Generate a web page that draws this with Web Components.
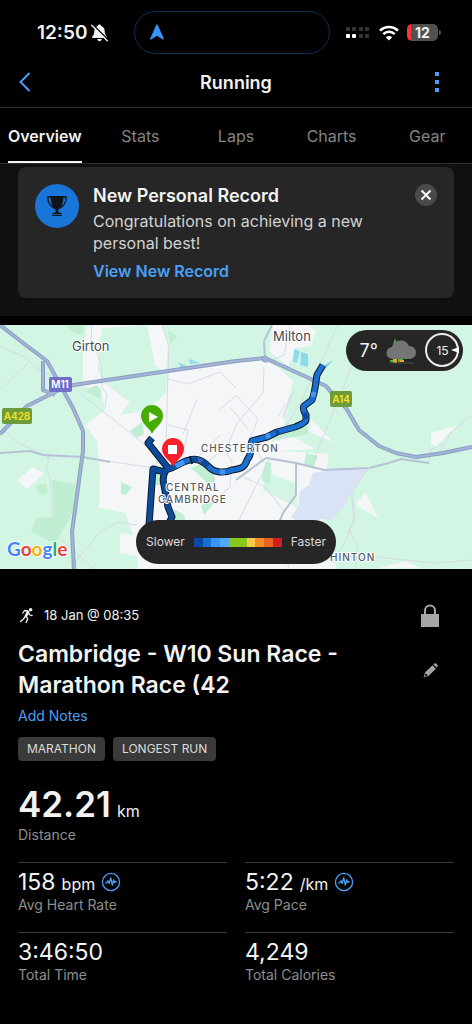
<!DOCTYPE html>
<html lang="en">
<head>
<meta charset="utf-8">
<meta name="viewport" content="width=device-width, initial-scale=1">
<title>Running</title>
<style>
  body {
    margin: 0;
    background: #000;
    color: #f2f2f2;
    font-family: Inter, "Liberation Sans", sans-serif;
    --accent: #4aa0f6;
    --muted: #8e8e8e;
    --line: #303030;
  }
  .stats {
    display: grid;
    grid-template-columns: 1fr 1fr;
    column-gap: 18px;
    padding: 0 18px 40px;
  }
  .wide {
    grid-column: 1 / -1;
  }
</style>
</head>
<body>
  <status-bar>12:50</status-bar>
  <nav-header>Running</nav-header>
  <tab-bar>
    <tab-item active>Overview</tab-item>
    <tab-item>Stats</tab-item>
    <tab-item>Laps</tab-item>
    <tab-item>Charts</tab-item>
    <tab-item>Gear</tab-item>
  </tab-bar>

  <record-banner>
    <span slot="title">New Personal Record</span>
    Congratulations on achieving a new personal best!
    <span slot="action">View New Record</span>
  </record-banner>

  <route-map>
    <weather-pill slot="weather" wind="15">7°</weather-pill>
    <pace-legend slot="legend"></pace-legend>
  </route-map>

  <activity-header>
    <span slot="date">18 Jan @ 08:35</span>
    Cambridge - W10 Sun Race - Marathon Race (42
    <tag-chip slot="tags">MARATHON</tag-chip>
    <tag-chip slot="tags">LONGEST RUN</tag-chip>
  </activity-header>

  <main class="stats">
    <stat-item class="wide" large unit="km" label="Distance">42.21</stat-item>
    <stat-item pulse unit="bpm" label="Avg Heart Rate">158</stat-item>
    <stat-item pulse unit="/km" label="Avg Pace">5:22</stat-item>
    <stat-item label="Total Time">3:46:50</stat-item>
    <stat-item label="Total Calories">4,249</stat-item>
  </main>

<script>
class StatusBar extends HTMLElement {
  constructor() {
    super();
    this.attachShadow({ mode: 'open' });
    this.shadowRoot.innerHTML = `
      <style>
        :host {
          display: grid;
          grid-template-columns: 1fr 196px 1fr;
          align-items: center;
          padding: 11px 8px 4px 0;
        }
        .left, .right {
          display: flex;
          align-items: center;
        }
        .left {
          padding-left: 37px;
          gap: 4px;
          font-size: 19px;
          line-height: 24px;
          font-weight: 600;
        }
        .right {
          gap: 8px;
          padding-left: 15px;
        }
        .island {
          box-sizing: border-box;
          height: 43px;
          border: 1px solid #0b315a;
          border-radius: 22px;
          padding: 12px 14px;
        }
        .battery {
          display: flex;
          align-items: center;
        }
        .level {
          width: 31px;
          border-radius: 5px;
          background: linear-gradient(to right, #ff3238 4px, #505050 4px);
          font-size: 14px;
          line-height: 17px;
          font-weight: 700;
          text-align: center;
        }
        .tip {
          width: 2px;
          height: 5px;
          margin-left: 1px;
          border-radius: 0 2px 2px 0;
          background: #505050;
        }
        svg { display: block; }
      </style>
      <div class="left">
        <slot></slot>
        <svg width="17" height="18" viewBox="0 0 17 18">
          <path d="M8.500 .5c-.9 0-1.500.6-1.600 1.400C4.500 2.500 3.300 4.600 3.300 7c0 3-.8 4.200-2 5.600-.5.600-.2 1.400.6 1.400h13.200c.8 0 1.100-.8.600-1.400-1.200-1.400-2-2.600-2-5.600 0-2.400-1.200-4.500-3.600-5.100C10 1.100 9.400.5 8.500.5zM6.200 15h4.600c-.2 1.400-1.100 2.200-2.300 2.200S6.400 16.400 6.200 15z" fill="#f2f2f2"/>
          <path d="M2 .8l15 15" stroke="#000" stroke-width="1.500"/>
          <path d="M.7 1.200l15.600 15.600" stroke="#f2f2f2" stroke-width="1.300" stroke-linecap="round"/>
        </svg>
      </div>
      <div class="island">
        <svg width="16" height="17" viewBox="0 0 16 17">
          <path d="M8 .6c.5 0 .8.300 1 .8l5.800 13.200c.3.800-.3 1.300-1 .9L8 11.800l-5.800 3.700c-.7.400-1.300-.1-1-.9L7 1.400c.2-.5.500-.8 1-.8z" fill="#3794fb"/>
        </svg>
      </div>
      <div class="right">
        <svg width="26" height="14" viewBox="0 0 26 14">
          <g fill="#353535">
            <rect x="1" y="1" width="4" height="4" rx="1"/>
            <rect x="7" y="1" width="4" height="4" rx="1"/>
            <rect x="14" y="1" width="4" height="4" rx="1"/>
            <rect x="20" y="1" width="4" height="4" rx="1"/>
            <rect x="14" y="8" width="4" height="4" rx="1"/>
            <rect x="20" y="8" width="4" height="4" rx="1"/>
          </g>
          <g fill="#fff">
            <rect x="1" y="8" width="4" height="4" rx="1"/>
            <rect x="7" y="8" width="4" height="4" rx="1"/>
          </g>
        </svg>
        <svg width="20" height="16" viewBox="0 0 20 16">
          <g fill="none" stroke="#fff" stroke-width="2.600">
            <path d="M1 5.700c5-5 13-5 18 0"/>
            <path d="M4.300 9.200c3.200-3.200 8.200-3.200 11.400 0"/>
          </g>
          <path d="M10 15.500l-3.200-3.300c1.800-1.700 4.600-1.700 6.400 0z" fill="#fff"/>
        </svg>
        <div class="battery"><div class="level">12</div><div class="tip"></div></div>
      </div>
    `;
  }
}

class NavHeader extends HTMLElement {
  constructor() {
    super();
    this.attachShadow({ mode: 'open' });
    this.shadowRoot.innerHTML = `
      <style>
        :host {
          display: flex;
          align-items: center;
          justify-content: space-between;
          padding: 0 13px;
          height: 49px;
          border-bottom: 1px solid var(--line);
        }
        h1 {
          margin: 0;
          font-size: 18px;
          line-height: 24px;
          font-weight: 600;
        }
        button {
          width: 44px;
          padding: 7px 6px 9px;
          border: 0;
          background: none;
          color: var(--accent);
        }
        button:last-child { padding-left: 18px; }
        svg { display: block; }
      </style>
      <button aria-label="Back">
        <svg width="12" height="20" viewBox="0 0 12 20"><path d="M10.500 1L1.500 10l9 9" fill="none" stroke="currentColor" stroke-width="2"/></svg>
      </button>
      <h1><slot></slot></h1>
      <button aria-label="More">
        <svg width="8" height="20" viewBox="0 0 8 20" fill="currentColor"><path d="M2 0h4v4H2zM2 8h4v4H2zM2 16h4v4H2z"/></svg>
      </button>
    `;
  }
}

class TabBar extends HTMLElement {
  constructor() {
    super();
    this.attachShadow({ mode: 'open' });
    this.shadowRoot.innerHTML = `
      <style>
        :host {
          display: block;
          overflow: hidden;
          border-bottom: 1px solid var(--line);
        }
        nav {
          display: grid;
          grid-template-columns: repeat(5, 1fr);
          margin: 0 -3px;
        }
      </style>
      <nav><slot></slot></nav>
    `;
  }
}

class TabItem extends HTMLElement {
  constructor() {
    super();
    this.attachShadow({ mode: 'open' });
    this.shadowRoot.innerHTML = `
      <style>
        :host {
          display: flex;
          justify-content: center;
          color: #858585;
        }
        :host([active]) {
          color: #f2f2f2;
          font-weight: 600;
        }
        a {
          padding: 17px 0 13px;
          border-bottom: 2px solid transparent;
          color: inherit;
          font-size: 16px;
          line-height: 23px;
          text-decoration: none;
        }
        :host([active]) a { border-color: #f2f2f2; }
      </style>
      <a href="#"><slot></slot></a>
    `;
  }
}

class RecordBanner extends HTMLElement {
  constructor() {
    super();
    this.attachShadow({ mode: 'open' });
    this.shadowRoot.innerHTML = `
      <style>
        :host {
          display: block;
          padding: 3px 18px 18px;
          background: #101010;
          border-bottom: 9px solid #000;
        }
        .card {
          display: flex;
          align-items: flex-start;
          gap: 14px;
          padding: 17px 17px 16px;
          border-radius: 8px;
          background: #262626;
        }
        .badge { flex: none; }
        .body { flex: 1; }
        h2 {
          margin: 0;
          font-size: 18px;
          line-height: 24px;
          font-weight: 600;
        }
        p {
          margin: 2px 0 6px;
          max-width: 300px;
          color: #d2d2d2;
          font-size: 16px;
          line-height: 22px;
        }
        a {
          display: block;
          color: var(--accent);
          font-size: 16px;
          line-height: 22px;
          font-weight: 600;
          text-decoration: none;
        }
        button {
          display: grid;
          place-items: center;
          width: 22px;
          height: 22px;
          padding: 0;
          border: 0;
          border-radius: 50%;
          background: #4a4a4a;
          color: #fff;
        }
        svg { display: block; }
      </style>
      <div class="card">
        <svg class="badge" width="44" height="44" viewBox="0 0 44 44">
          <circle cx="22" cy="22" r="22" fill="#1976d8"/>
          <path d="M15.500 12h13c0 8-2.200 11.500-5.300 14v2.200c2.300.3 3.700 1 3.700 1.800h-9.800c0-.8 1.400-1.500 3.700-1.800V26c-3.100-2.500-5.300-6-5.300-14zM17 30.800h10V32H17z" fill="#101418"/>
          <path d="M16 13h-3.200c0 6.500 3 9.600 6.700 11.200M28 13h3.200c0 6.500-3 9.600-6.700 11.200" fill="none" stroke="#101418" stroke-width="1.300"/>
        </svg>
        <div class="body">
          <h2><slot name="title"></slot></h2>
          <p><slot></slot></p>
          <a href="#"><slot name="action"></slot></a>
        </div>
        <button aria-label="Dismiss">
          <svg width="12" height="12" viewBox="0 0 12 12"><path d="M1.500 1.500l9 9M10.500 1.500l-9 9" stroke="currentColor" stroke-width="2"/></svg>
        </button>
      </div>
    `;
  }
}

class RouteMap extends HTMLElement {
  constructor() {
    super();
    this.attachShadow({ mode: 'open' });
    this.shadowRoot.innerHTML = `
      <style>
        :host {
          display: block;
          position: relative;
          background: #d3f5e3;
        }
        .map {
          display: block;
          width: 100%;
          height: 244px;
        }
        .urban { fill: #f5f6f7; }
        .green { fill: #d3f5e3; }
        .wood { fill: #bfeed3; }
        .water { fill: #90daee; }
        .motorway { fill: none; stroke: #8b9dc3; stroke-width: 4; stroke-linejoin: round; }
        .motorway-core { fill: none; stroke: #a3b4d6; stroke-width: 2; stroke-linejoin: round; }
        .road { fill: none; stroke: #b6c2d5; stroke-width: 2; stroke-linejoin: round; }
        .lane { fill: none; stroke: #d5dce6; stroke-width: 1; stroke-linejoin: round; }
        .town, .area {
          fill: #454a50;
          stroke: #fff;
          stroke-width: 2px;
          stroke-linejoin: round;
          paint-order: stroke;
        }
        .town { font-size: 13px; }
        .area { font-size: 10px; fill: #555a60; font-weight: 500; letter-spacing: 1px; }
        .shield { font-size: 10px; font-weight: 600; text-anchor: middle; }
        .google {
          font-family: Lato, sans-serif;
          font-size: 19px;
          font-weight: 700;
          stroke: #fff;
          stroke-width: 2px;
          paint-order: stroke;
        }
        .weather {
          position: absolute;
          top: 5px;
          right: 9px;
        }
        .legend {
          position: absolute;
          bottom: 5px;
          left: 50%;
          transform: translateX(-50%);
        }
      </style>
      <svg class="map" viewBox="0 0 472 244" preserveAspectRatio="xMidYMid slice">
        <rect class="green" width="472" height="244"/>
        <!-- built-up areas -->
        <path class="urban" d="M87 2l6-2h70l5 20-2 26 70-8 28-3 15 8 14 13-4 20-5 24 5 9 26 15-37 2 51 3-4 22-3 60-4 20 18 8 4 33H140l-3-41-17-3v-20l13 2-8-22-26-5 1-35-3-32-12-16 20-15-4-18-18-6V28z"/>
        <path class="urban" d="M273 0h35l8 6-5 15-15 2-8 18-19-15zM311 94l22 23-24-10zM366 168l12 25-25-14zM431 108l27-8-22 21-5-2zM379 243l27-7 14 7zM17 155l16-13 11 7-17 15z"/>
        <path class="green" d="M102 3l45-3 8 40 12 9-1 19-19 17-27 5 10-13-23-17-9-13 1-27z"/>
        <path class="green" d="M269 135l4 15 23 8 2 25-35-18zM300 193l26 5 18-14 8-18 10 27-8 16-52-6z"/>
        <!-- woods and parks -->
        <path class="wood" d="M66 0h18l-1 10-10-3zM168 6l10 5-8 8zM96 60l5 4-1 10-14-8zM130 106l12-9 2 12-8 4zM52 155l25 4-5 30-17 30-24-12 5-14 18-1zM36 161l10-3 2 10-8 2zM121 157l11 5-6 8-5-1zM262 152l4-16 5 2-1 20-8-2zM306 128l12 3-5 12-9-3zM283 104l23-4 3 9-38 7zM190 143l12-4 12 10 1 8-8 1-10-10zM174 184l10 6 3 14h-12zM201 180l14-3-11 13zM156 148h7v12h-7z"/>
        <path class="water" d="M178 37l9 4-6 2zM189 34l11 4-10 1zM294 24l6 2-3 12-4-1zM301 27l7 2v13l-8-2z"/>
        <path d="M313 148l23-4 33-1-18 25-8 15-12 12-10-1-18 6-12-8 8-12v-13l10-7z" fill="#dae2f5"/>
        <!-- minor roads -->
        <path class="lane" d="M0 22l25 10 13 13 14 6M0 65l28-27M5 106l12 11 38 18M48 128v12l-2 5 4 7 4 56 24 22 16 14M92 0l-1 15 5 10 6 17v20l5 8-2 12M162 0l7 22-1 24-2 74M166 120l-12 22M168 54l20 5 32-12 16 16M197 74l-14 35M220 84l16-13M168 100l20 5-4 20M264 42l-1 26-26 30-9 22-24 20M236 70l22 24-8 20 14 24M338 0l-12 26-24 48-24 42M354 35l-18 46-22 53M472 90l-22 18-12 24M290 0l-6 30-18 8M243 152l22 10 20 25M269 135l-30 60M218 118l14 18-2 26-24 20M352 168l3 25-8 20-12 22M350 206l8 16-3 22M280 205l9 39M296 232h80l60 6 36-3M190 196l15 40M230 82l18 22M200 130l20-20"/>
        <path class="lane" stroke-width="2" d="M72 62l81 64M70 244l14-18 16-19 18-10 19 3M108 136l45 7M290 70l-6 24M294 66l-12 26M286 78l-8 14"/>
        <path class="road" d="M0 128l30-2 13 4 40 2 27 5M236 155l30-22 30 5 28 7 45-2 20-5 12-4 28 4M296 138v32l-13 18-5 12M265 33l-1-17 8-16"/>
        <path class="lane" d="M369 143l-18 25 3 26-6 14M429 138l2-14 12-4"/>
        <!-- motorways -->
        <path class="motorway" d="M0 0l27 21 20 15 11 20 15 27 10 23v20l-11 81 2 37M0 109l27-28 40-20 40-6 129-19 29-3 61 28 10 12 10 10 13 22 20 16 17 7 20 4 27-4 29-6M43 36v29l12 5"/>
        <path class="motorway-core" d="M0 0l27 21 20 15 11 20 15 27 10 23v20l-11 81 2 37M0 109l27-28 40-20 40-6 129-19 29-3 61 28 10 12 10 10 13 22 20 16 17 7 20 4 27-4 29-6M43 36v29l12 5"/>
        <circle cx="265" cy="34" r="3" fill="#a3b4d6" stroke="#8b9dc3"/>
        <!-- labels -->
        <text class="town" x="72" y="26">Girton</text>
        <text class="town" x="273" y="16">Milton</text>
        <text class="area" x="330" y="236">HINTON</text>
        <rect x="49" y="52" width="23" height="15" rx="2" fill="#726dc8"/>
        <text class="shield" x="60" y="63" fill="#fff">M11</text>
        <rect x="2" y="83" width="30" height="16" rx="2" fill="#6c9c3b"/>
        <text class="shield" x="17" y="95" fill="#fce51e">A428</text>
        <rect x="330" y="66" width="22" height="16" rx="2" fill="#6c9c3b"/>
        <text class="shield" x="341" y="78" fill="#fce51e">A14</text>
        <!-- recorded track -->
        <g fill="none" stroke-linejoin="round">
          <path d="M325 40l8-5-7 8z" fill="#7fd0ee"/>
          <path d="M152 113l-4 5 20 25-3 4-12-3-4 56M165 147q-3 6-1 13l4 22 4 10-4 8M168 144C175 143 182 136 190 135C197 133 203 136 208 141C213 147 222 149 232 145C240 144 245 143 247 135Q252 129 250 122L252 116L267 112L277 107L295 102Q306 98 306 95L306 90Q302 83 304 81L312 75Q314 70 315 63L317 50L323 40" stroke="#111b28" stroke-width="7"/>
          <path d="M152 113l-4 5 20 25-3 4-12-3-4 56M165 147q-3 6-1 13l4 22 4 10-4 8" stroke="#0a4a9c" stroke-width="5"/>
          <path d="M168 144C175 143 182 136 190 135C197 133 203 136 208 141C213 147 222 149 232 145C240 144 245 143 247 135Q252 129 250 122L252 116L267 112L277 107L295 102Q306 98 306 95L306 90Q302 83 304 81L312 75Q314 70 315 63L317 50L323 40" stroke="#1a6fd0" stroke-width="5"/>
          <path d="M176 141l8-4M220 147h5M266 112l4-2M313 72l1-5" stroke="#4596f2" stroke-width="5"/>
          <path d="M168 144l7-3M192 135h6M202 136l6 5M276 108l3-1M304 88l2 6" stroke="#0a4a9c" stroke-width="5"/>
          <path d="M190 131l2 8" stroke="#111b28" stroke-width="2"/>
          <path d="M200 134v4" stroke="#d0322c"/>
        </g>
        <text class="area" x="201" y="127">CHESTERTON</text>
        <text class="area" x="166" y="166">CENTRAL</text>
        <text class="area" x="158" y="178">CAMBRIDGE</text>
        <path d="M152 109c-2-6-11-10-11-18a11 11 0 0 1 22 0c0 8-9 12-11 18z" fill="#46ad00"/>
        <path d="M149 87l9 5-9 5z" fill="#fff"/>
        <path d="M173 142c-2-6-11-10-11-18a11 11 0 0 1 22 0c0 8-9 12-11 18z" fill="#f8202c"/>
        <rect x="168" y="120" width="9" height="9" fill="#fff"/>
        <text class="google" x="7" y="231"><tspan fill="#4285f4">G</tspan><tspan fill="#ea4335">o</tspan><tspan fill="#f4b400">o</tspan><tspan fill="#4285f4">g</tspan><tspan fill="#34a853">l</tspan><tspan fill="#ea4335">e</tspan></text>
      </svg>
      <div class="weather"><slot name="weather"></slot></div>
      <div class="legend"><slot name="legend"></slot></div>
    `;
  }
}

class WeatherPill extends HTMLElement {
  constructor() {
    super();
    this.attachShadow({ mode: 'open' });
    this.shadowRoot.innerHTML = `
      <style>
        :host {
          display: flex;
          align-items: center;
          gap: 8px;
          padding: 3px 3px 3px 14px;
          border-radius: 21px;
          background: #262626;
          font-size: 18px;
          line-height: 22px;
        }
        .wind {
          display: grid;
          place-items: center;
          width: 35px;
          height: 35px;
          font-size: 12px;
        }
        .wind svg, .wind span { grid-area: 1 / 1; }
        svg { display: block; }
      </style>
      <slot></slot>
      <svg width="31" height="26" viewBox="0 0 31 26">
        <path d="M6 11L9 0l3 10zM4 22h4v2H4zM12 21h5v3h-5z" fill="#48b93c"/>
        <path d="M7 21h4v4H7zM14 22h4v2h-4z" fill="#f2a22a"/>
        <path d="M7 21a6 6 0 0 1-1-12 9 9 0 0 1 17-1 6.500 6.500 0 0 1 1 13z" fill="#757575"/>
        <path d="M4 25h24" stroke="#4b4b4b"/>
      </svg>
      <div class="wind">
        <svg width="35" height="35" viewBox="0 0 35 35">
          <circle cx="17" cy="17" r="16" fill="none" stroke="#ececec" stroke-width="2"/>
          <path d="M26 17l8-3v6z" fill="#fff"/>
        </svg>
        <span></span>
      </div>
    `;
  }

  connectedCallback() {
    this.shadowRoot.querySelector('.wind span').textContent = this.getAttribute('wind');
  }
}

class PaceLegend extends HTMLElement {
  constructor() {
    super();
    this.attachShadow({ mode: 'open' });
    this.shadowRoot.innerHTML = `
      <style>
        :host {
          display: flex;
          align-items: center;
          justify-content: center;
          gap: 9px;
          width: 200px;
          height: 44px;
          border-radius: 22px;
          background: #262626;
          color: #dcdcdc;
          font-size: 12px;
          line-height: 18px;
        }
        .scale {
          display: flex;
          width: 88px;
          height: 9px;
        }
        .scale i { flex: 1; }
      </style>
      <span>Slower</span>
      <div class="scale"></div>
      <span>Faster</span>
    `;
    this.colors = [
      '#0a4aa4', '#1a6fd2', '#3896fa', '#55a7fc', '#86ca1c', '#86ca1c',
      '#f9cb4b', '#fa8e26', '#e6651b', '#d31f22'
    ];
  }

  connectedCallback() {
    this.shadowRoot.querySelector('.scale').innerHTML =
      this.colors.map((color) => `<i style="background:${color}"></i>`).join('');
  }
}

class ActivityHeader extends HTMLElement {
  constructor() {
    super();
    this.attachShadow({ mode: 'open' });
    this.shadowRoot.innerHTML = `
      <style>
        :host {
          display: block;
          padding: 34px 18px 0;
        }
        .row {
          display: flex;
          align-items: center;
          justify-content: space-between;
        }
        .date {
          display: flex;
          align-items: center;
          gap: 9px;
          font-size: 13px;
          line-height: 24px;
        }
        h2 {
          margin: 0;
          max-width: 340px;
          font-size: 23px;
          line-height: 31px;
          font-weight: 600;
        }
        .name { padding: 12px 0 4px; }
        a {
          color: var(--accent);
          font-size: 14px;
          line-height: 22px;
          text-decoration: none;
        }
        .tags {
          display: flex;
          gap: 8px;
          padding-top: 10px;
        }
        button {
          display: grid;
          place-items: center;
          width: 48px;
          height: 24px;
          padding: 0;
          border: 0;
          background: none;
          color: #a6a6a6;
        }
        svg { display: block; }
      </style>
      <div class="row">
        <div class="date">
          <svg width="17" height="17" viewBox="0 0 17 17" fill="none" stroke="#f2f2f2" stroke-linecap="round" stroke-linejoin="round">
            <circle cx="12.600" cy="2.800" r="1.800" fill="#f2f2f2" stroke="none"/>
            <path d="M10 5L8 8.800" stroke-width="2.800"/>
            <path d="M9.500 4L6.500 3.500 4.800 6M10.800 6.500l1.400 1.700 2 .1M7.300 9.500L5.500 12 2.500 14.500M8.200 9.500l1.500 2.200-1.500 3.800" stroke-width="1.300"/>
          </svg>
          <slot name="date"></slot>
        </div>
        <button aria-label="Privacy">
          <svg width="18" height="23" viewBox="0 0 18 23"><path d="M0 10h18v13H0z" fill="currentColor"/><path d="M4 11V6.500a5 5 0 0 1 10 0V11" fill="none" stroke="currentColor" stroke-width="2"/></svg>
        </button>
      </div>
      <div class="row name">
        <h2><slot></slot></h2>
        <button aria-label="Edit name">
          <svg width="15" height="15" viewBox="0 0 15 15"><path d="M.5 14.500l1.500-5 7.500-7.200 3.400 3.400L5.500 13zM10.400 1.400L11.500.5c.5-.4 1-.4 1.500.1l1.500 1.500c.5.500.4 1 0 1.500l-.9 1z" fill="currentColor"/><path d="M1.500 13.500l1.300-3 2 2z" fill="#000"/></svg>
        </button>
      </div>
      <a href="#">Add Notes</a>
      <div class="tags"><slot name="tags"></slot></div>
    `;
  }
}

class TagChip extends HTMLElement {
  constructor() {
    super();
    this.attachShadow({ mode: 'open' });
    this.shadowRoot.innerHTML = `
      <style>
        :host {
          display: block;
          padding: 0 9px;
          border-radius: 4px;
          background: #3a3a3a;
          color: #dcdcdc;
          font-size: 12px;
          line-height: 24px;
        }
      </style>
      <slot></slot>
    `;
  }
}

class StatItem extends HTMLElement {
  constructor() {
    super();
    this.attachShadow({ mode: 'open' });
    this.shadowRoot.innerHTML = `
      <style>
        :host {
          display: block;
          height: 69px;
          border-top: 1px solid #383838;
        }
        :host([large]) {
          height: 101px;
          border-top: 0;
        }
        .value {
          display: flex;
          align-items: baseline;
          gap: 6px;
          padding-top: 5px;
          font-size: 23px;
          line-height: 28px;
        }
        .unit {
          font-size: 16px;
          line-height: 16px;
        }
        .unit:empty { display: none; }
        :host([large]) .value {
          padding-top: 21px;
          font-size: 35px;
          line-height: 44px;
          font-weight: 600;
        }
        :host([large]) .unit { font-weight: 400; }
        .label {
          color: var(--muted);
          font-size: 14px;
          line-height: 18px;
        }
        svg {
          display: none;
          align-self: center;
          color: var(--accent);
        }
        :host([pulse]) svg { display: block; }
      </style>
      <div class="value">
        <slot></slot>
        <span class="unit"></span>
        <svg width="20" height="20" viewBox="0 0 20 20" fill="none" stroke="currentColor" stroke-width="1.300" stroke-linejoin="round">
          <circle cx="10" cy="10" r="8.600"/>
          <path d="M4.200 10.800h1.300l1.500-2 1.200 2.600 1.600-5.600 1.500 7.200 1.500-5.200.8 2.800.8-1h1.400"/>
        </svg>
      </div>
      <div class="label"></div>
    `;
  }

  connectedCallback() {
    this.shadowRoot.querySelector('.unit').textContent = this.getAttribute('unit') || '';
    this.shadowRoot.querySelector('.label').textContent = this.getAttribute('label');
  }
}

customElements.define('status-bar', StatusBar);
customElements.define('nav-header', NavHeader);
customElements.define('tab-bar', TabBar);
customElements.define('tab-item', TabItem);
customElements.define('record-banner', RecordBanner);
customElements.define('route-map', RouteMap);
customElements.define('weather-pill', WeatherPill);
customElements.define('pace-legend', PaceLegend);
customElements.define('activity-header', ActivityHeader);
customElements.define('tag-chip', TagChip);
customElements.define('stat-item', StatItem);
</script>
</body>
</html>
